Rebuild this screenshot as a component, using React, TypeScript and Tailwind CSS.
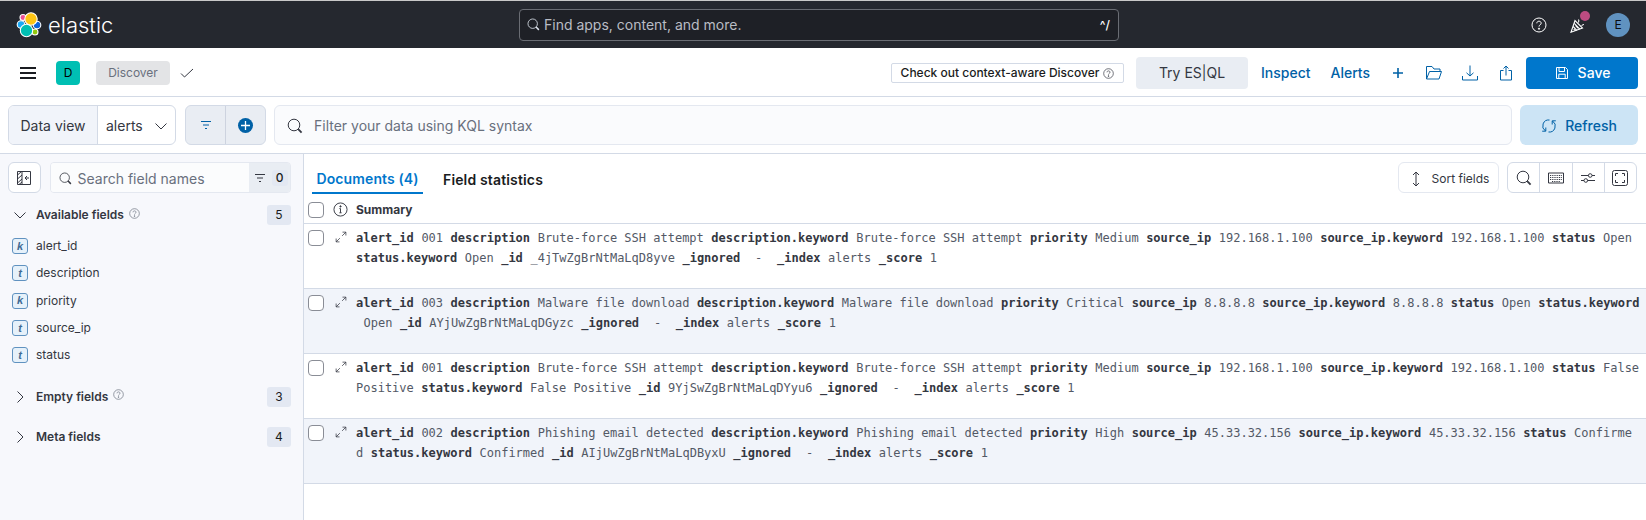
import React from "react";

const mono = "[font-family:'DejaVu_Sans_Mono',monospace]";

const commonKeys = (
  rest: [string, string][],
  id: string,
): [string, string][] => [
  ...rest,
  ["_id", id],
  ["_ignored", "\u00a0-\u00a0"],
  ["_index", "alerts"],
  ["_score", "1"],
];

const alertRow = (
  alertId: string,
  description: string,
  priority: string,
  ip: string,
  status: string,
  id: string,
) =>
  commonKeys(
    [
      ["alert_id", alertId],
      ["description", description],
      ["description.keyword", description],
      ["priority", priority],
      ["source_ip", ip],
      ["source_ip.keyword", ip],
      ["status", status],
      ["status.keyword", status],
    ],
    id,
  );

const rows = [
  alertRow("001", "Brute-force SSH attempt", "Medium", "192.168.1.100", "Open", "_4jTwZgBrNtMaLqD8yve"),
  alertRow("003", "Malware file download", "Critical", "8.8.8.8", "Open", "AYjUwZgBrNtMaLqDGyzc"),
  alertRow("001", "Brute-force SSH attempt", "Medium", "192.168.1.100", "False Positive", "9YjSwZgBrNtMaLqDYyu6"),
  alertRow("002", "Phishing email detected", "High", "45.33.32.156", "Confirmed", "AIjUwZgBrNtMaLqDByxU"),
];

const fields = [
  { type: "k", name: "alert_id" },
  { type: "t", name: "description" },
  { type: "k", name: "priority" },
  { type: "t", name: "source_ip" },
  { type: "t", name: "status" },
];

const Svg = ({ size = 16, className, children }: { size?: number; className?: string; children: React.ReactNode }) => (
  <svg width={size} height={size} viewBox="0 0 16 16" fill="none" stroke="currentColor" strokeWidth={1} className={className}>
    {children}
  </svg>
);

const SearchIcon = ({ size = 16, className }: { size?: number; className?: string }) => (
  <Svg size={size} className={className}>
    <circle cx="7" cy="7" r="5.8" />
    <path d="M11.2 11.2l3.4 3.4" strokeWidth={1.8} />
  </Svg>
);

const FilterIcon = ({ className }: { className?: string }) => (
  <Svg className={className}>
    <path d="M3 4.5h10M5 8h6M7 11.5h2" />
  </Svg>
);

const HelpIcon = ({ size = 12, className }: { size?: number; className?: string }) => (
  <Svg size={size} className={className}>
    <circle cx="8" cy="8" r="7" />
    <path d="M5.8 6.3c0-1.3 1-2.1 2.2-2.1s2.2.8 2.2 2c0 1.7-2.2 1.6-2.2 3.4" />
    <circle cx="8" cy="11.7" r=".6" fill="currentColor" />
  </Svg>
);

const Chevron = ({ open }: { open?: boolean }) => (
  <Svg size={16} className="shrink-0 text-[#343741]">
    {open ? <path d="M2.5 5.5L8 11l5.5-5.5" /> : <path d="M5.5 2.5L11 8l-5.5 5.5" />}
  </Svg>
);

const Checkbox = () => (
  <span className="block w-4 h-4 shrink-0 rounded-[4px] border border-[#8a8d96] bg-white" />
);

const ElasticLogo = () => (
  <svg width="26" height="26" viewBox="15 12 26 26" className="shrink-0">
    <g stroke="#ffffff" strokeWidth="1.1">
      <circle cx="22" cy="17.5" r="3" fill="#ee5097" />
      <circle cx="20" cy="24.5" r="3.8" fill="#1ba9f5" />
      <circle cx="36" cy="25" r="3.8" fill="#0b64dd" />
      <circle cx="34" cy="32" r="3" fill="#93c90e" />
      <circle cx="30" cy="19" r="6.2" fill="#fec514" />
      <circle cx="25.5" cy="30.5" r="6.2" fill="#00bfb3" />
    </g>
  </svg>
);

const GlobalHeader = () => (
  <header className="h-12 shrink-0 flex items-center bg-[#25282f] border-t border-[#c9c9c9] pl-4 pr-4">
    <ElasticLogo />
    <span className="ml-1.5 w-[63px] text-white text-[22px] font-light leading-none">elastic</span>
    <div className="ml-[408px] w-[600px] h-[32px] flex items-center rounded-[4px] border border-[#6a6d74] bg-[#1e2026] pl-[7px] pr-2 text-[#b9bcc4]">
      <SearchIcon size={13} className="text-[#dfe5ef]" />
      <span className="ml-1 text-sm">Find apps, content, and more.</span>
      <span className="ml-auto text-xs text-white font-medium">^/</span>
    </div>
    <div className="ml-auto flex items-center text-white">
      <HelpIcon size={16} />
      <div className="relative ml-[23px] w-4 h-4">
        <svg width="16" height="16" viewBox="0 0 16 16" fill="none" stroke="currentColor" strokeWidth="1.1">
          <path d="M1 15.2L5 3.5l7.5 7.5L1 15.2z" />
          <path d="M3.2 9.5l3.6 3.8M4.3 6.3l5.5 5.8M3.7 12l1.3 1.4M5.5 8.5l2.5 2.7" />
          <path d="M8.5 2.5c.6 1 .5 2-.2 3M14 7.5c-1 0-1.9.5-2.4 1.3" />
        </svg>
        <span className="absolute -top-[6px] left-[10px] w-2.5 h-2.5 rounded-full bg-[#bd4c81]" />
      </div>
      <span className="ml-5 w-6 h-6 rounded-full bg-[#6092c0] flex items-center justify-center text-[#0b0d12] text-xs">E</span>
    </div>
  </header>
);

const AppMenu = () => (
  <div className="h-[49px] shrink-0 flex items-center bg-white border-b border-[#d3dae6] pl-5 pr-2 pt-[2px]">
    <div className="flex flex-col gap-[3.5px] w-4">
      <span className="h-[1.5px] bg-[#1a1c21]" />
      <span className="h-[1.5px] bg-[#1a1c21]" />
      <span className="h-[1.5px] bg-[#1a1c21]" />
    </div>
    <span className="ml-5 w-6 h-6 rounded-[4px] bg-[#00bfb3] flex items-center justify-center text-xs text-black">D</span>
    <span className="ml-4 w-[74px] h-6 rounded-[4px] bg-[#e3e4e6] flex items-center justify-center text-xs text-[#69707d]">Discover</span>
    <Svg size={16} className="ml-[9px] text-[#343741]">
      <path d="M2 8.5l3.5 3.5L14 4" />
    </Svg>
    <div className="ml-auto w-[233px] h-5 flex items-center justify-center rounded-[2px] border border-[#d3dae6] text-xs text-[#1a1c21] font-medium">
      Check out context-aware Discover
      <HelpIcon size={11} className="ml-1 text-[#343741]" />
    </div>
    <div className="ml-3 w-28 h-8 rounded-[4px] bg-[#e9edf3] flex items-center justify-center text-sm text-[#343741]">
      Try ES|QL
    </div>
    <span className="ml-[13px] text-sm text-[#0061a6] font-medium">Inspect</span>
    <span className="ml-5 text-sm text-[#0061a6] font-medium">Alerts</span>
    <div className="ml-5 flex items-center gap-5 text-[#0061a6]">
      <Svg>
        <path d="M8 3v10M3 8h10" strokeWidth={1.6} />
      </Svg>
      <Svg>
        <path d="M.5 14V1.500h5.500l2 2.500h6v2.500M.5 14h12.500l2.500-7.500H3.500L.5 14z" />
      </Svg>
      <Svg>
        <path d="M8 .5V11M4.500 7.800L8 11l3.500-3.200M.5 11v4h15v-4" />
      </Svg>
      <Svg>
        <path d="M8 10.500V1M5.500 3.500L8 1l2.500 2.500M5.500 5.500h-3V15h11V5.500h-3" />
      </Svg>
    </div>
    <button className="ml-3 w-28 h-8 rounded-[4px] bg-[#0077cc] flex items-center justify-center gap-2 text-sm text-white font-medium">
      <Svg>
        <path d="M2.500 2.500h9l2 2v9h-11zM5 2.500v4h5.500v-4M4.800 13.500V9.200h6.400v4.300" />
      </Svg>
      Save
    </button>
  </div>
);

const QueryBar = () => (
  <div className="h-[57px] shrink-0 flex items-center bg-white border-b border-[#d3dae6] pl-2 pr-2">
    <div className="w-[168px] h-10 flex rounded-[6px] border border-[#d3dae6] overflow-hidden text-sm text-[#343741]">
      <span className="w-[89px] pt-0.5 bg-[#f1f4fa] border-r border-[#d3dae6] flex items-center justify-center">Data view</span>
      <span className="flex-1 pt-0.5 flex items-center pl-2 gap-2.5">
        alerts
        <Chevron open />
      </span>
    </div>
    <div className="ml-[9px] w-[81px] h-10 flex rounded-[6px] border border-[#d3dae6] bg-[#e9edf3] overflow-hidden">
      <span className="w-10 border-r border-[#cdd3df] flex items-center justify-center text-[#0061a6]">
        <FilterIcon />
      </span>
      <span className="flex-1 flex items-center justify-center">
        <span className="w-[15px] h-[15px] rounded-full bg-[#0061a6] flex items-center justify-center">
          <svg width="9" height="9" viewBox="0 0 9 9" stroke="#fff" strokeWidth="1.3">
            <path d="M4.500 0v9M0 4.500h9" />
          </svg>
        </span>
      </span>
    </div>
    <div className="ml-[8px] flex-1 h-10 pt-0.5 flex items-center rounded-[6px] border border-[#e4e8f0] bg-[#fafbfd] pl-3 text-sm text-[#69707d]">
      <SearchIcon className="text-[#343741]" />
      <span className="ml-[11px]">Filter your data using KQL syntax</span>
    </div>
    <button className="ml-2 w-[118px] h-10 pt-0.5 rounded-[6px] bg-[#cce4f5] flex items-center justify-center gap-2 text-sm text-[#0061a6] font-medium">
      <Svg>
        <path d="M8.500 2A6 6 0 0 0 4.500 13M4.800 9.500V13.200H1.200" />
        <path d="M7.500 14A6 6 0 0 0 11.500 3M11.200 6.500V2.800H14.800" />
      </Svg>
      Refresh
    </button>
  </div>
);

const FieldToken = ({ type }: { type: string }) => (
  <span className="w-4 h-4 shrink-0 rounded-[3px] border border-[#6092c0] bg-[#e6f1fa] flex items-center justify-center text-[11px] font-bold italic text-[#3f6a94] [font-family:'Liberation_Sans',sans-serif]">
    {type}
  </span>
);

const CountBadge = ({ value }: { value: number }) => (
  <span className="ml-auto w-6 h-5 rounded-[3px] bg-[#e3e8f2] flex items-center justify-center text-xs text-[#1a1c21]">
    {value}
  </span>
);

const Sidebar = () => (
  <aside className="w-[304px] shrink-0 bg-[#f7f8fc] border-r border-[#d3dae6] pt-2 pl-2 pr-3">
    <div className="flex items-center">
      <span className="w-[33px] h-[31px] rounded-[6px] border border-[#d3dae6] bg-white flex items-center justify-center text-[#343741]">
        <Svg>
          <path d="M1.500 1.500h13v13h-13zM6 1.500v13" />
          <path d="M1.500 5l4-3.500M1.500 9l4.500-4M1.500 13l4.500-4M3 14.500l3-2.500M9 8h4M9 8l2-2M9 8l2 2" />
        </Svg>
      </span>
      <div className="ml-[9px] w-[245px] h-[31px] flex rounded-[4px] border border-[#e4e8f0] overflow-hidden">
        <div className="flex-1 pt-0.5 flex items-center pl-2 bg-[#fbfcfd] text-sm text-[#69707d]">
          <SearchIcon size={13} className="text-[#343741]" />
          <span className="ml-1.5">Search field names</span>
        </div>
        <div className="w-[41px] bg-[#e9edf3] flex items-center justify-center gap-1 text-[#343741]">
          <FilterIcon />
          <span className="w-4 h-4 rounded-[3px] bg-[#e3e8f2] flex items-center justify-center text-xs font-medium text-[#1a1c21]">0</span>
        </div>
      </div>
    </div>
    <div className="mt-[12px] h-5 flex items-center pl-1 text-xs">
      <Chevron open />
      <span className="ml-2 font-semibold text-[#343741]">Available fields</span>
      <HelpIcon size={11} className="ml-[5px] -mt-1 text-[#69707d]" />
      <CountBadge value={5} />
    </div>
    <ul className="mt-[7.5px]">
      {fields.map((field) => (
        <li key={field.name} className="h-[27.3px] flex items-center pl-[4px] text-xs text-[#343741]">
          <FieldToken type={field.type} />
          <span className="ml-2">{field.name}</span>
        </li>
      ))}
    </ul>
    <div className="mt-[18px] h-5 flex items-center pl-1 text-xs">
      <Chevron />
      <span className="ml-2 font-semibold text-[#343741]">Empty fields</span>
      <HelpIcon size={11} className="ml-[5px] -mt-1 text-[#69707d]" />
      <CountBadge value={3} />
    </div>
    <div className="mt-5 h-5 flex items-center pl-1 text-xs">
      <Chevron />
      <span className="ml-2 font-semibold text-[#343741]">Meta fields</span>
      <CountBadge value={4} />
    </div>
  </aside>
);

const ToolbarButton = ({ children, last }: { children: React.ReactNode; last?: boolean }) => (
  <span className={`flex-1 flex items-center justify-center text-[#343741] ${last ? "" : "border-r border-[#d3dae6]"}`}>
    {children}
  </span>
);

const DocumentsPanel = () => (
  <main className="flex-1 min-w-0 bg-white">
    <div className="h-[42px] flex items-start pl-2 pr-[9px] pt-2">
      <div className="h-8 pt-[3px] flex items-center border-b-2 border-[#0077cc] text-sm font-semibold text-[#0077cc] w-[111px] justify-center tracking-[0.1px]">
        Documents (4)
      </div>
      <div className="ml-5 h-8 pt-[3px] flex items-center text-sm font-semibold text-[#1a1c21] tracking-[0.15px]">Field statistics</div>
      <button className="ml-auto w-[101px] h-[31px] pt-0.5 rounded-[6px] border border-[#e4e8f0] flex items-center justify-center gap-2 text-xs text-[#343741]">
        <Svg>
          <path d="M8 1v14M5 4l3-3 3 3M5 12l3 3 3-3" />
        </Svg>
        Sort fields
      </button>
      <div className="ml-2 w-[130px] h-[31px] flex rounded-[6px] border border-[#d3dae6]">
        <ToolbarButton>
          <SearchIcon />
        </ToolbarButton>
        <ToolbarButton>
          <Svg>
            <path d="M.5 3h15v10H.5z" />
            <path d="M2 5.500h12M2 7.500h12M2 9.500h12M4 11.500h8" strokeWidth={1.2} strokeDasharray="1 .8" />
          </Svg>
        </ToolbarButton>
        <ToolbarButton>
          <Svg>
            <path d="M1 5.500h7.500M12 5.500h3M1 10.500h3M7.500 10.500H15" />
            <circle cx="10.2" cy="5.5" r="1.8" />
            <circle cx="5.8" cy="10.5" r="1.8" />
          </Svg>
        </ToolbarButton>
        <ToolbarButton last>
          <Svg>
            <rect x=".5" y=".5" width="15" height="15" rx="2" />
            <path d="M3.500 6V3.500H6M10 3.500h2.500V6M12.500 10v2.500H10M6 12.500H3.500V10" />
          </Svg>
        </ToolbarButton>
      </div>
    </div>
    <div className="h-[28px] flex items-center pl-1 border-b border-[#d3dae6] text-xs font-bold text-[#343741]">
      <Checkbox />
      <Svg size={15} className="ml-[9px] text-[#343741]">
        <circle cx="8" cy="8" r="7" />
        <path d="M8 7v4.500M6.800 11.500h2.400M6.800 7H8" />
        <circle cx="8" cy="4.7" r=".7" fill="currentColor" />
      </Svg>
      <span className="ml-[8px]">Summary</span>
    </div>
    {rows.map((row, index) => (
      <div
        key={index}
        className={`h-[65px] flex items-start pl-1 pt-[6px] border-b border-[#d3dae6] ${index % 2 === 1 ? "bg-[#f1f4fa]" : "bg-white"}`}
      >
        <Checkbox />
        <Svg size={12} className="ml-[11px] mt-[1px] text-[#343741]">
          <path d="M1.500 14.500l5-5M1.500 10v4.500H6M14.500 1.500l-5 5M10 1.500h4.500V6" />
        </Svg>
        <dl className={`ml-[9px] flex-1 min-w-0 pr-[3px] text-xs leading-5 -mt-[2px] text-[#535966] ${mono}`}>
          {row.map(([key, value], i) => (
            <React.Fragment key={i}>
              <dt className="inline font-bold text-[#343741]">
                {key}
                <wbr />
              </dt>
              <dd className="inline break-all ml-[7.6px] mr-[7.5px]">{value}</dd>
              <wbr />
            </React.Fragment>
          ))}
        </dl>
      </div>
    ))}
  </main>
);

export default function App() {
  return (
    <div className="w-full h-[520px] overflow-hidden flex flex-col bg-white [font-family:Inter,sans-serif]">
      <GlobalHeader />
      <AppMenu />
      <QueryBar />
      <div className="flex-1 flex min-h-0">
        <Sidebar />
        <DocumentsPanel />
      </div>
    </div>
  );
}
